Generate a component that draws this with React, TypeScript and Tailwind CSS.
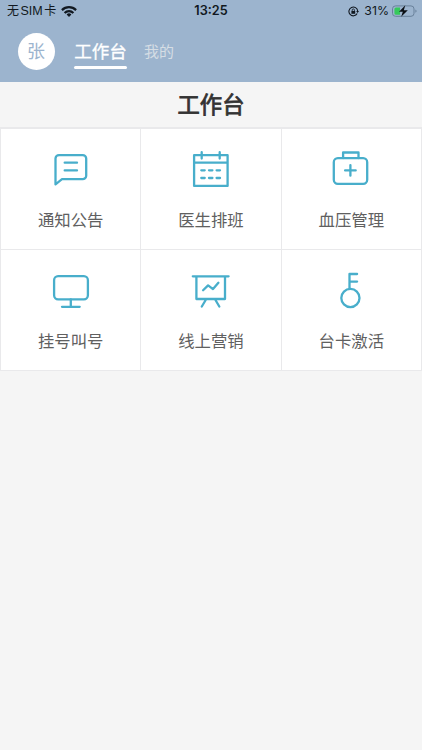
import type { ReactNode } from 'react';

const menus: { label: string; icon: ReactNode }[] = [
  {
    label: '通知公告',
    icon: (
      <>
        <path d="M5.5 36.3V10.6a3.5 3.5 0 0 1 3.5-3.5h23.7a3.5 3.5 0 0 1 3.5 3.5v17.1a3.5 3.5 0 0 1-3.5 3.5H12Z" />
        <path d="M14.7 14.7H27M14.7 22.4H27" />
      </>
    ),
  },
  {
    label: '医生排班',
    icon: (
      <>
        <path d="M4.1 7.2h33.5v30.7H4.1ZM4.1 14.7h33.5M11.7 4.2v6.4M29.7 4.2v6.4" />
        <path d="M11.3 22.3h3.4M19 22.3h3.4M26.6 22.3H30M11.3 30h3.4M19 30h3.4M26.6 30H30" />
      </>
    ),
  },
  {
    label: '血压管理',
    icon: (
      <>
        <rect x="3.8" y="10.2" width="33.4" height="25.6" rx="4" />
        <path d="M13.1 10V4.5h15.4V10M20.4 17.1v10.6M15.1 22.4h10.6" />
      </>
    ),
  },
  {
    label: '挂号叫号',
    icon: (
      <>
        <rect x="4.1" y="7.2" width="33.8" height="23.1" rx="4" />
        <path d="M20.8 30.3v7.4M12 37.8h17.7" />
      </>
    ),
  },
  {
    label: '线上营销',
    icon: (
      <>
        <path d="M2.8 7.3h35.8M6.4 7.3V30H35V7.3M16.3 30l-4.5 7.5M24.9 30l4.4 7.5" />
        <path d="m13.1 21.3 5-4.9 4.9 3.7 5.4-6.3" />
      </>
    ),
  },
  {
    label: '台卡激活',
    icon: (
      <>
        <circle cx="20.4" cy="29" r="9.1" />
        <path d="M19.5 19.9V5h7.6M19.5 12.6h7.6" />
      </>
    ),
  },
];

function StatusBar() {
  return (
    <div className="grid h-[23px] grid-cols-3 items-center pl-[7px] pr-[7px] text-[12px] leading-none text-[#111820]">
      <div className="flex items-center">
        <span className="font-['Liberation_Sans','Noto_Sans_CJK_SC',sans-serif]">
          无<span className="mx-[1.5px] text-[12.5px]">SIM</span>卡
        </span>
        <svg className="ml-[5px] h-[11px] w-4" viewBox="0 0 16 11" fill="none" stroke="currentColor" strokeWidth="2.2">
          <path d="M.9 4.1a10.2 10.2 0 0 1 14.2 0M3.6 6.9a6.2 6.2 0 0 1 8.8 0" />
          <path d="m8 11-2.4-2.5a3.4 3.4 0 0 1 4.8 0Z" fill="currentColor" stroke="none" />
        </svg>
      </div>
      <span className="text-center text-[12.7px] font-semibold">13:25</span>
      <div className="flex items-center justify-end">
        <svg className="mr-[5px] h-[11px] w-[11px]" viewBox="0 0 11 11" fill="none" stroke="currentColor">
          <path d="M9.2 7.5A4.4 4.4 0 1 1 9.7 5" strokeWidth="1.1" />
          <path d="M8.2 5h2.8L9.6 7Z" fill="currentColor" stroke="none" />
          <path d="M3.4 5h3.8v2.8H3.4Z" fill="currentColor" stroke="none" />
          <path d="M4.2 5.2V4a1.1 1.1 0 0 1 2.2 0v1.2" strokeWidth=".8" />
        </svg>
        <span className="text-[12.3px]">31%</span>
        <svg className="-mr-[2px] ml-[3px] h-3 w-[25px]" viewBox="0 0 25 12">
          <rect x=".5" y=".9" width="21.5" height="10.4" rx="3" fill="none" stroke="#68809a" />
          <path d="M4 2.4h4v7.4H4a1.6 1.6 0 0 1-1.6-1.6V4A1.6 1.6 0 0 1 4 2.4Z" fill="#35c95b" />
          <path d="M23.4 4.4v3.4q1.2-.5 1.2-1.7t-1.2-1.7Z" fill="#68809a" />
          <path d="M13.3.3 7 6.8h3.8L9.2 11.8l6.6-6.6h-4Z" fill="#0b0f14" />
        </svg>
      </div>
    </div>
  );
}

export default function App() {
  return (
    <div className="min-h-[750px] w-full bg-[#f5f5f5] font-['Inter','Noto_Sans_CJK_SC',sans-serif]">
      <header className="h-[82px] bg-[#9cb4ce]">
        <StatusBar />
        <div className="flex items-start pl-[17.5px] pt-[9.7px]">
          <div className="flex h-[37px] w-[37px] items-center justify-center rounded-full bg-white pt-px text-[18px] leading-none text-[#9cb4ce]">
            张
          </div>
          <nav className="flex items-start pl-[19.5px] pt-[4.3px]">
            <div className="flex w-[53px] flex-col items-center">
              <span className="text-[17.5px] leading-[30px] text-white [-webkit-text-stroke:0.3px_white]">工作台</span>
              <span className="-mt-[0.5px] h-[3px] w-full rounded-full bg-white" />
            </div>
            <span className="ml-[17px] text-[15px] leading-[29px] text-[#d5dde4]">我的</span>
          </nav>
        </div>
      </header>

      <h1 className="h-[45px] text-center text-[22.3px] leading-[45px] text-[#333] [-webkit-text-stroke:0.8px_#333]">
        工作台
      </h1>

      <main className="grid grid-cols-3 grid-rows-[120px_120px] gap-px bg-[#e9e9eb] px-px pb-px pt-[1.5px]">
        {menus.map((menu) => (
          <div key={menu.label} className="flex flex-col items-center bg-white pt-[19px]">
            <svg
              className="h-[42px] w-[42px]"
              viewBox="0 0 42 42"
              fill="none"
              stroke="#48aecb"
              strokeWidth="2.3"
              strokeLinecap="round"
              strokeLinejoin="round"
            >
              {menu.icon}
            </svg>
            <span className="mt-[18px] text-[16.4px] leading-6 text-[#606060]">{menu.label}</span>
          </div>
        ))}
      </main>
    </div>
  );
}
